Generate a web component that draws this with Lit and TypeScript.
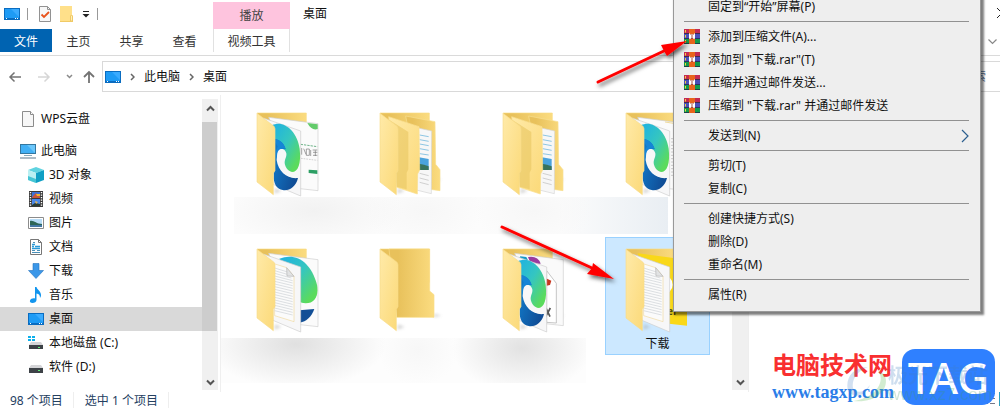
import { LitElement, html, svg, css } from "lit";
import { customElement, property } from "lit/decorators.js";
import { classMap } from "lit/directives/class-map.js";

const desktopIcon = html`<svg width="16" height="12" viewBox="0 0 16 12"><rect x=".5" y=".5" width="15" height="11" fill="#1e9bf5" stroke="#0a6cc0"/><path d="M7 1h8v8z" fill="#3aabff"/><path d="M1 10.5h14" stroke="#0a6cc0"/><path d="M2 10.5h1M11 10.5h1M13 10.5h1" stroke="#fff"/></svg>`;
const fileIcon = html`<svg width="16" height="16" viewBox="0 0 16 16"><path d="M2.500.500h8l3 3v12h-11z" fill="#f7f7f7" stroke="#8c8c8c"/><path d="M10.500.500v3h3" fill="#fff" stroke="#8c8c8c"/></svg>`;
const checkIcon = html`<svg width="12" height="16" viewBox="0 0 12 16"><path d="M.5.5h8l3 3v12H.5z" fill="#f7f7f7" stroke="#929292"/><path d="M8.500.500v3h3" fill="none" stroke="#929292"/><path d="M2.500 8.500L5 11l5-5" fill="none" stroke="#e8531b" stroke-width="1.800"/></svg>`;
const smallFolder = html`<svg width="13" height="16" viewBox="0 0 13 16"><path d="M0 0h12v9l1 1v5H0z" fill="#ffe08a"/><path d="M10.500 15v-5l1-1 1 1v5z" fill="#fff0b8" stroke="#e9bb4c" stroke-width=".7"/><path d="M0 15.500h13" stroke="#f0ca66"/></svg>`;
const pcIcon = html`<svg width="16" height="16" viewBox="0 0 16 16"><rect x=".5" y="1.500" width="15" height="9" fill="#42b0f5" stroke="#35779f"/><path d="M7 2h8v8z" fill="#6cc7fb"/><path d="M4 12.500h8" stroke="#8ab"/><path d="M0 15h16" stroke="#8ca0ae" stroke-width="1.400"/></svg>`;
const cubeIcon = html`<svg width="16" height="16" viewBox="0 0 16 16"><path d="M0 3l8-3 8 3-8 3z" fill="#5fd3e0"/><path d="M0 3l8 3v10l-8-3z" fill="#b9eff2"/><path d="M16 3L8 6v10l8-3z" fill="#0f9fc4"/><path d="M0 9l8 3v4l-8-3z" fill="#46c5d4"/></svg>`;
const videoIcon = html`<svg width="16" height="16" viewBox="0 0 16 16"><path d="M1 0h14v16H1z" fill="#3a3a3a"/><path d="M4 1h8v6H4z" fill="#3d73d8"/><path d="M4 8h8v7H4z" fill="#4a88e8"/><path d="M2.500 1v15M13.500 1v15" stroke="#fff" stroke-width="1.400" stroke-dasharray="1.200 1.300"/><path d="M5 5l3-3 4 4v1H4z" fill="#c8553d"/><path d="M8 3h4v2H9z" fill="#f2b631"/><path d="M4 14l3-2 5 1v2H4z" fill="#293c33"/><path d="M7 10l3 1-2 2z" fill="#e9b54d"/></svg>`;
const pictureIcon = html`<svg width="16" height="16" viewBox="0 0 16 16"><path d="M.5 2.500h15v11H.5z" fill="#fff" stroke="#8c8c8c"/><path d="M2 4h12v8H2z" fill="#b7dcf7"/><path d="M2 6c4-1 6 3 12 3v3H2z" fill="#2d6658"/><path d="M2 10h12v2H2z" fill="#4478a5"/></svg>`;
const docIcon = html`<svg width="16" height="16" viewBox="0 0 16 16"><path d="M2.500.500h8l3 3v12h-11z" fill="#fff" stroke="#777"/><path d="M10.500.500v3h3" fill="none" stroke="#777"/><path d="M4 5.500h3M4 7.500h2M7 7.500h5M4 9.500h8" stroke="#2a9ad8" stroke-width="1.400"/><path d="M5 3.500h2M4 11.500h3M4 13.500h8M9 11.500h3" stroke="#4a8fb8"/></svg>`;
const downIcon = html`<svg width="16" height="16" viewBox="0 0 16 16"><path d="M5 .5h6v7h4.500L8 15.500.500 7.500H5z" fill="#3b97e8" stroke="#2472c0" stroke-width=".6"/></svg>`;
const musicIcon = html`<svg width="16" height="16" viewBox="0 0 16 16"><path d="M7 0h1.500c.5 3 5 4 4.500 9l-1 2c0-3-1-4-3.500-4.500V13c0 2-2 3-4 3s-3-1-2.500-2.500S5 11 7 11.500z" fill="#1295ee"/></svg>`;
const driveC = html`<svg width="16" height="16" viewBox="0 0 16 16"><path d="M0 1h3v2H0zM4 1h3v2H4zM0 4h3v2H0zM4 4h3v2H4z" fill="#0cb0ec"/><path d="M3 7h10l2 3H1z" fill="#d5d5d8"/><path d="M1 10h14v4H1z" fill="#3d4247"/><path d="M10 12.500h2" stroke="#5ff076"/></svg>`;
const driveD = html`<svg width="16" height="16" viewBox="0 0 16 16"><path d="M3 6h10l2 3H1z" fill="#d5d5d8"/><path d="M1 9h14v5H1z" fill="#3d4247"/><path d="M10 11.500h2" stroke="#5ff076"/></svg>`;
const rarIcon = html`<svg width="16" height="16" viewBox="0 0 16 16"><path d="M0 0h16v5H0z" fill="#c42a52"/><path d="M0 5h16v5H0z" fill="#4a4fb8"/><path d="M0 10h16v5H0z" fill="#129a4a"/><path d="M0 4.500h16M0 9.500h16M0 14.500h16" stroke="#222c4a" stroke-width=".8"/><path d="M5 0h6v15H5z" fill="#e8641c"/><path d="M5 5h6v5H5z" fill="#a84a3d"/><path d="M5.500 4.500v5h1v-4M10.500 4.500v5h-1v-4M8 5v4" fill="none" stroke="#fff" stroke-width="1"/><path d="M1.500 1v2.500M1.500 6v2.500M1.500 11v2.500" stroke="#f1d43c"/></svg>`;
const chevron = html`<svg width="5" height="8" viewBox="0 0 5 8"><path d="M1 1l3 3-3 3" fill="none" stroke="#666" stroke-width="1.500"/></svg>`;

type Kind = "edge-poster" | "nested" | "edge-text" | "text-edge" | "empty" | "edge-docs" | "text-yellow";

const edgeLogo = svg`
  <path d="M48 40C82 22 124 58 131 110c5 45-5 70-23 70-16 0-30-17-24-33 8-18 2-36-9-37C68 90 58 84 54 82z" fill="url(#teal)"/>
  <path d="M54 80c21 3 31 17 35 32-22-9-28 13-27 33 5 35 33 57 64 53-6 26-27 40-46 36-16-4-24-14-27-34z" fill="url(#navy)"/>
  <path d="M53 80c18 2 32 14 36 31-16-7-26 8-27 32-5-14-3-30 3-39-3-8-7-12-12-14z" fill="#1585d6"/>
  <path d="M64 124c3-17 23-17 27 0 2 13-8 20-4 34 5 16 17 24 30 22 6-1 9-4 11-8v24c-30 8-68-22-64-72z" fill="#f7f7f8"/>`;
const rearPage = svg`<path d="M38 16l148 19v201l-54-6z" fill="#fbfbfb" stroke="#cfcfcf" stroke-width="2"/>`;
const frontPage = svg`<path d="M22 18l112 39v195l-83-35z" fill="#f7f7f8" stroke="#cdcdcd" stroke-width="2"/>`;
const textLines = svg`
  <path d="M54 47l38 12 22 26v136l-58-18z" fill="#fbfbfb" stroke="#f0d9a0" stroke-width="2"/>
  <path d="M56 60l42 13M56 68l48 14M56 76l50 14M56 84l54 14M56 92l54 13M56 100l54 13M56 108l54 13M56 116l54 13M56 124l54 13M56 132l54 13M56 140l54 13M56 148l54 13M56 156l54 13M56 164l54 13M56 172l54 13M56 180l54 13M56 188l54 13" stroke="#cbd0d4" stroke-width="2"/>
  <path d="M92 59l1 25 21 1z" fill="#e2e3e4" stroke="#b4b4b4" stroke-width="2"/>`;

function contents(kind: Kind) {
  switch (kind) {
    case "edge-poster":
      return svg`${rearPage}
        <path d="M154 33l31 4v14q-18 6-31-18z" fill="#63cb6b"/>
        <path d="M134 97l50 7" stroke="#6fb58a" stroke-width="3" stroke-dasharray="7 3"/>
        <path d="M137 108v20M143 110l7 17M151 111h9v19h-9zM164 114v18M170 114h14M171 121h13M171 130h13M178 115v17" fill="none" stroke="#777" stroke-width="2"/>
        <path d="M135 139l49 6" stroke="#bbb" stroke-width="2" stroke-dasharray="5 3"/>
        <path d="M158 173l26 2v11l-26-3z" fill="#2d9f64"/>
        ${frontPage}${edgeLogo}`;
    case "edge-text":
      return svg`${rearPage}<path d="M120 30l44 7 22 30" fill="none" stroke="#e9c86b" stroke-width="2"/>
        <path d="M138 80h46M138 90h46M138 100h46M138 110h46M138 120h46M138 130h46M138 140h46M138 150h46M138 160h46M138 170h46M138 180h46M138 190h46" stroke="#ccc" stroke-width="3"/>
        ${frontPage}${edgeLogo}`;
    case "text-edge":
      return svg`${rearPage}<path d="M70 32c50-20 95 10 113 78 6 35-7 55-34 56-17-2-27-8-32-20z" fill="url(#teal)"/>
        <path d="M130 187l45-4c-8 23-24 38-44 41z" fill="#124f96"/>${frontPage}${textLines}`;
    case "edge-docs":
      return svg`<path d="M38 16l146 19v198l-54-6z" fill="#fafafa" stroke="#cfcfcf" stroke-width="2"/>
        <path d="M78 27q30-5 38 20l-30 0z" fill="#9a3c9f"/><path d="M55 25l18 2 5 10-28-4z" fill="#159ac9"/>
        <path d="M134 68l29 38v119l-29-2z" fill="#fff" stroke="#aaa" stroke-width="2"/>
        <path d="M130 90l18 8-4 13-14 3z" fill="#c7371f"/><path d="M132 180l12 26M145 180l-14 26" stroke="#555" stroke-width="5"/>
        ${frontPage}${edgeLogo}`;
    case "text-yellow":
      return svg`<path d="M38 16l148 19v198l-54-6z" fill="#f9d819"/><circle cx="115" cy="110" r="28" fill="#fff"/>
        <text class="art-text" x="126" y="201">er</text>${frontPage}${textLines}`;
    case "nested":
      return svg`<path d="M80 12l88 17 2 128 13 16v63l-60-8z" fill="url(#back)" stroke="#f8df91" stroke-width="2"/>
        <path d="M118 48l40 9-1 188-45-11z" fill="#f7f7f7" stroke="#d5d5d5" stroke-width="2"/>
        <path d="M122 69l27 5M122 83l27 5M122 96l27 5M122 110l27 5M122 125l27 4" stroke="#58acd8" stroke-width="2"/>
        <path d="M120 136l29 5v33h-29z" fill="#4aa3dc"/><path d="M120 155q15 2 29 8v11h-29z" fill="#38735b"/>
        <path d="M122 184l27 7M122 198l27 7M122 211l27 7" stroke="#bbb" stroke-width="2"/>
        <path d="M29 14l91 30 2 130-6 12-1 60-62-20z" fill="url(#flap)" stroke="#f9df91" stroke-width="2"/>
        <path d="M28 22l60 38v112l-5 10v50l-30-8z" fill="#e9c764" opacity=".65"/>`;
    default:
      return svg`<path d="M53 208h112v-68l-13-11V3H30z" fill="url(#back)" stroke="#f9dc87" stroke-width="2"/>`;
  }
}

@customElement("folder-art")
class FolderArt extends LitElement {
  @property() kind: Kind = "empty";
  static styles = css`
    :host { display: block; }
    svg { display: block; }
    .art-text { font: bold 30px "Open Sans", sans-serif; fill: #4d4310; }
  `;
  render() {
    return html`<svg width="70" height="85" viewBox="0 0 210 255" aria-hidden="true">
      <defs>
        <linearGradient id="back"><stop offset=".2" stop-color="#e8c15b"/><stop offset="1" stop-color="#fbdc80"/></linearGradient>
        <linearGradient id="flap" y2="1"><stop offset="0" stop-color="#ffeaa8"/><stop offset="1" stop-color="#fbd978"/></linearGradient>
        <linearGradient id="teal" y2="1"><stop offset=".1" stop-color="#22b5dc"/><stop offset=".45" stop-color="#35c6c0"/><stop offset=".85" stop-color="#5bdb5c"/></linearGradient>
        <linearGradient id="navy" y2=".6"><stop offset="0" stop-color="#1180d0"/><stop offset="1" stop-color="#104d96"/></linearGradient>
        <filter id="soft"><feGaussianBlur stdDeviation="4"/></filter>
      </defs>
      <path d="M55 245l22-8-20-8zM165 208l22-5-20-6z" fill="#999" opacity=".4" filter="url(#soft)"/>
      <path d="M3 3h148v100H57z" fill="url(#back)" stroke="#f9dc87" stroke-width="2"/>
      ${contents(this.kind)}
      <path d="M3 4l45 34q9 5 9 12v126l-5 8v64L3 210z" fill="url(#flap)" stroke="#f7dc8c" stroke-width="2"/>
    </svg>`;
  }
}

interface Place { label: string; icon: unknown; level: number; current?: boolean; }
const places: Place[] = [
  { label: "此电脑", icon: pcIcon, level: 0 },
  { label: "3D 对象", icon: cubeIcon, level: 1 },
  { label: "视频", icon: videoIcon, level: 1 },
  { label: "图片", icon: pictureIcon, level: 1 },
  { label: "文档", icon: docIcon, level: 1 },
  { label: "下载", icon: downIcon, level: 1 },
  { label: "音乐", icon: musicIcon, level: 1 },
  { label: "桌面", icon: desktopIcon, level: 1, current: true },
  { label: "本地磁盘 (C:)", icon: driveC, level: 1 },
  { label: "软件 (D:)", icon: driveD, level: 1 },
];

const folders: Kind[] = ["edge-poster", "nested", "nested", "edge-text", "text-edge", "empty", "edge-docs", "text-yellow"];

interface Entry { label: string; rar?: boolean; sub?: boolean; }
const menu: Entry[][] = [
  [{ label: "固定到“开始”屏幕(P)" }],
  [
    { label: "添加到压缩文件(A)...", rar: true },
    { label: '添加到 "下载.rar"(T)', rar: true },
    { label: "压缩并通过邮件发送...", rar: true },
    { label: '压缩到 "下载.rar" 并通过邮件发送', rar: true },
  ],
  [{ label: "发送到(N)", sub: true }],
  [{ label: "剪切(T)" }, { label: "复制(C)" }],
  [{ label: "创建快捷方式(S)" }, { label: "删除(D)" }, { label: "重命名(M)" }],
  [{ label: "属性(R)" }],
];

@customElement("app-root")
class AppRoot extends LitElement {
  static styles = css`
    :host {
      display: flex; flex-direction: column; position: relative; height: 100vh; overflow: hidden;
      background: #fff; color: #111;
      font: 12px/16px "Noto Sans", "Noto Sans CJK SC", sans-serif;
    }
    * { box-sizing: border-box; }
    svg { display: block; flex: none; }
    button, input { font: inherit; color: inherit; background: none; border: 0; padding: 0; margin: 0; }
    a { color: inherit; text-decoration: none; }
    .titlebar { display: flex; height: 29px; align-items: flex-start; }
    .quick { display: flex; align-items: center; gap: 9px; width: 213px; height: 27px; padding-left: 4px; }
    .bar { width: 1px; height: 12px; background: #999; margin: 0 2px 0 -2px; }
    .group { width: 77px; height: 27px; margin-top: 2px; background: #fec4de; color: #444; text-align: center; line-height: 28px; }
    .title { flex: 1; padding-left: 13px; line-height: 28px; }
    .close { margin: 8px -7px 0 0; }
    .tabs { display: flex; height: 27px; border-bottom: 1px solid #dadada; color: #333; }
    .tab { width: 53px; height: 23px; padding-top: 2px; }
    .tab.file { width: 52px; background: #0063b1; color: #fff; }
    .tab.tools { width: 77px; margin-left: 2px; border: solid #e1e1e1; border-width: 0 1px; }
    .expand { margin: 0 3px 0 auto; }
    .location { display: flex; align-items: center; padding: 5px 0 3px; }
    .nav { display: flex; align-items: center; gap: 15px; width: 102px; padding-left: 8px; }
    .nav .up { margin-left: -5px; }
    .crumbs { flex: 1; display: flex; align-items: center; gap: 9px; height: 31px; padding-left: 2px; border: 1px solid #d9d9d9; }
    .arrow { display: flex; }
    .search { width: 140px; height: 31px; margin: 0 -12px 0 10px; padding: 0 25px 0 8px; border: 1px solid #d9d9d9; text-align: right; }
    .search::placeholder { color: #57719a; opacity: 1; }
    .body { flex: 1; min-height: 0; display: flex; overflow: hidden; }
    .side { width: 202px; padding-top: 12px; }
    .place { display: flex; align-items: center; gap: 5px; height: 24px; padding-left: 20px; }
    .place.child { padding-left: 28px; }
    .place.current { background: #d9d9d9; }
    .cloud { margin-bottom: 8px; }
    .scroll { width: 16px; margin: 4px 0 2px; background: #f0f0f0; display: flex; flex-direction: column; align-items: center; }
    .scroll button { width: 16px; height: 23px; padding-bottom: 5px; display: flex; align-items: center; justify-content: center; }
    .thumb { width: 15px; height: 209px; margin-right: 1px; background: #cdcdcd; }
    .scroll .end { margin-top: auto; height: 16px; padding: 0; }
    .split { width: 1px; margin-left: 2px; background: #efefef; }
    .files { flex: 1; position: relative; min-width: 0; padding: 6px 0 0 15px; overflow: hidden; }
    .grid { display: grid; grid-template-columns: repeat(auto-fill, 105px); gap: 18px; }
    .tile { display: flex; flex-direction: column; justify-content: flex-start; align-items: stretch; height: 118px; padding: 10px 0 0; border: 1px solid transparent; }
    .tile folder-art { padding-left: 19px; }
    .tile.selected { background: #cce8ff; border-color: #99d1ff; }
    .name { text-align: center; padding-top: 3px; }
    .smudge { position: absolute; }
    .first { left: 13px; top: 102px; width: 434px; height: 37px;
      background: radial-gradient(ellipse 90px 36px at 80px 14px, #f2f2f2, transparent),
        radial-gradient(ellipse 60px 36px at 190px 14px, #f7f7f7, transparent),
        radial-gradient(ellipse 60px 36px at 300px 14px, #f7f7f7, transparent),
        linear-gradient(90deg, transparent 75%, #e9eef3), #fcfcfc; }
    .second { left: -3px; top: 243px; width: 368px; height: 45px;
      background: radial-gradient(ellipse 90px 44px at 78px 6px, #e0e0e0, transparent),
        radial-gradient(ellipse 40px 36px at 200px 12px, #f7f7f7, transparent),
        radial-gradient(ellipse 70px 44px at 304px 10px, #e2e2e2, transparent), #fdfdfd; }
    .preview { width: 252px; border-left: 1px solid #eee; }
    .status { display: flex; align-items: flex-start; height: 16px; padding-left: 10px; color: #24405f; line-height: 18px; }
    .status span { padding-right: 10px; margin-right: 11px; border-right: 1px solid #eee; white-space: nowrap; }
    .views { margin-left: auto; }
    .menu { position: absolute; left: 673px; top: -8px; width: 308px; padding: 2px 11px 5px 10px; background: #eee; border: 1px solid #999; box-shadow: 2px 2px 2px 1px rgba(0,0,0,.5); }
    .section + .section { border-top: 1px solid #919191; margin-top: 3px; padding-top: 3px; }
    .entry { display: flex; align-items: center; gap: 8px; width: 100%; height: 23px; text-align: left; white-space: nowrap; }
    .slot { width: 16px; }
    .entry .sub { margin-left: auto; }
    .notes { position: absolute; left: 490px; top: 30px; }
    .mark { position: absolute; right: 5px; bottom: 3px; display: flex; align-items: center; gap: 8px; }
    .brand { display: flex; flex-direction: column; color: #f92f30; font: bold 24px/30px "Noto Sans CJK SC", sans-serif; }
    .site { color: #2a7de8; font: bold 18px/26px "Liberation Serif", serif; }
    .tag { width: 93px; height: 56px; border-radius: 13px; background: #2f80ff; color: #fff; font: 500 44px/56px "Noto Sans", sans-serif; text-align: center; }
    .ghost { position: absolute; right: 8px; bottom: 5px; display: flex; align-items: center; opacity: .25; }
    .ghost-text { display: flex; flex-direction: column; font: bold 20px/22px "Noto Sans CJK SC", sans-serif; color: #3f7fc0; }
    .ghost-site { font: 17px/17px "Liberation Sans", sans-serif; color: #3d9a60; }
  `;

  place(p: Place) {
    return html`<a href="#" class=${classMap({ place: true, child: p.level === 1, current: !!p.current })}>${p.icon}<span>${p.label}</span></a>`;
  }

  scroller(thumb: boolean) {
    return html`<div class="scroll">
      <button aria-label="向上滚动"><svg width="9" height="7" viewBox="0 0 9 7"><path d="M1 5.500l3.500-3.500L8 5.500" fill="none" stroke="#555" stroke-width="2"/></svg></button>
      ${thumb ? html`<div class="thumb"></div>` : ""}
      <button class="end" aria-label="向下滚动"><svg width="9" height="7" viewBox="0 0 9 7"><path d="M1 1.500L4.500 5 8 1.500" fill="none" stroke="#555" stroke-width="2"/></svg></button>
    </div>`;
  }

  render() {
    return html`
      <header class="titlebar">
        <div class="quick">${desktopIcon}<span class="bar"></span>
          <button aria-label="属性">${checkIcon}</button>
          <button aria-label="新建文件夹">${smallFolder}</button>
          <button aria-label="自定义"><svg width="8" height="8" viewBox="0 0 8 8"><path d="M1 1.500h6" stroke="#222"/><path d="M.5 4h7L4 7.500z" fill="#222"/></svg></button>
          <span class="bar"></span>
        </div>
        <div class="group">播放</div>
        <div class="title">桌面</div>
        <button class="close" aria-label="关闭"><svg width="10" height="10" viewBox="0 0 10 10"><path d="M0 0l10 10M10 0L0 10" stroke="#222"/></svg></button>
      </header>
      <nav class="tabs">
        <button class="tab file">文件</button><button class="tab">主页</button><button class="tab">共享</button><button class="tab">查看</button>
        <button class="tab tools">视频工具</button>
        <button class="expand" aria-label="展开功能区"><svg width="9" height="6" viewBox="0 0 9 6"><path d="M.5.500l4 4 4-4" fill="none" stroke="#888" stroke-width="1.200"/></svg></button>
      </nav>
      <div class="location">
        <div class="nav">
          <button aria-label="后退"><svg width="14" height="12" viewBox="0 0 14 12"><path d="M13 6H2M6.500 1.500L2 6l4.500 4.500" fill="none" stroke="#737373" stroke-width="1.500"/></svg></button>
          <button aria-label="前进"><svg width="14" height="12" viewBox="0 0 14 12"><path d="M1 6h11M7.500 1.500L12 6l-4.500 4.500" fill="none" stroke="#d6d6d6" stroke-width="1.500"/></svg></button>
          <button aria-label="最近"><svg width="7" height="5" viewBox="0 0 7 5"><path d="M1 1l2.500 2.500L6 1" fill="none" stroke="#8a8a8a" stroke-width="1.500"/></svg></button>
          <button class="up" aria-label="向上"><svg width="12" height="13" viewBox="0 0 12 13"><path d="M6 13V2M1 7l5-5 5 5" fill="none" stroke="#737373" stroke-width="1.800"/></svg></button>
        </div>
        <div class="crumbs">${desktopIcon}<span class="arrow">${chevron}</span><a href="#">此电脑</a><span class="arrow">${chevron}</span><a href="#">桌面</a></div>
        <input class="search" type="text" aria-label="搜索" placeholder="搜索" />
      </div>
      <main class="body">
        <nav class="side">
          <a href="#" class="place cloud">${fileIcon}<span>WPS云盘</span></a>
          ${places.map((p) => this.place(p))}
        </nav>
        ${this.scroller(true)}
        <div class="split"></div>
        <section class="files">
          <div class="grid">
            ${folders.map((k, i) => html`<button class=${classMap({ tile: true, selected: i === 7 })} aria-label="文件夹"><folder-art .kind=${k}></folder-art>${i === 7 ? html`<span class="name">下载</span>` : ""}</button>`)}
          </div>
          <div class="smudge first"></div>
          <div class="smudge second"></div>
        </section>
        ${this.scroller(false)}
        <aside class="preview"></aside>
      </main>
      <footer class="status"><span>98 个项目</span><span>选中 1 个项目</span>
        <svg class="views" width="20" height="14" viewBox="0 0 20 14"><path d="M.5 1v12M4 1.500h4M4 6.500h4M4 11.500h4M10 1.500h5M10 6.500h5M10 11.500h5" stroke="#778"/><path d="M19.500 0v14" stroke="#2ba0c0"/></svg>
      </footer>
      <div class="menu" role="menu">
        ${menu.map((s) => html`<div class="section">${s.map((e) => html`<button class="entry" role="menuitem"><span class="slot">${e.rar ? rarIcon : ""}</span><span>${e.label}</span>${e.sub ? html`<svg class="sub" width="8" height="14" viewBox="0 0 8 14"><path d="M1 1l6 6-6 6" fill="none" stroke="#2b5f8f" stroke-width="1.200"/></svg>` : ""}</button>`)}</div>`)}
      </div>
      <svg class="notes" width="210" height="260" viewBox="490 30 210 260" aria-hidden="true">
        <defs><filter id="drop" x="-20%" y="-20%" width="150%" height="150%"><feDropShadow dx="2" dy="3" stdDeviation="2" flood-opacity=".6"/></filter></defs>
        <g filter="url(#drop)" fill="#f00">
          <path d="M598 82L666 50" stroke="#f00" stroke-width="3" stroke-linecap="round"/>
          <path d="M687 41l-26 4 3 6 3 5z"/>
          <path d="M502 227L592 268" stroke="#f00" stroke-width="3" stroke-linecap="round"/>
          <path d="M614 279l-21-16-1 5-5 6z"/>
        </g>
      </svg>
      <div class="mark">
        <div class="brand"><span>电脑技术网</span><a href="#" class="site">www.tagxp.com</a></div>
        <div class="tag">TAG</div>
      </div>
      <div class="ghost" aria-hidden="true">
        <svg width="44" height="40" viewBox="0 0 44 40"><path d="M24 4C8 4 1 16 4 28c7 9 18 4 22-6-6 8-14 9-17 3-2-9 6-18 15-21z" fill="#4e86c8"/><path d="M34 8c8 10-2 27-25 30 26 3 38-15 31-27z" fill="#51b548"/></svg>
        <div class="ghost-text"><span>极光下载站</span><span class="ghost-site">www.xz7.com</span></div>
      </div>
    `;
  }
}
